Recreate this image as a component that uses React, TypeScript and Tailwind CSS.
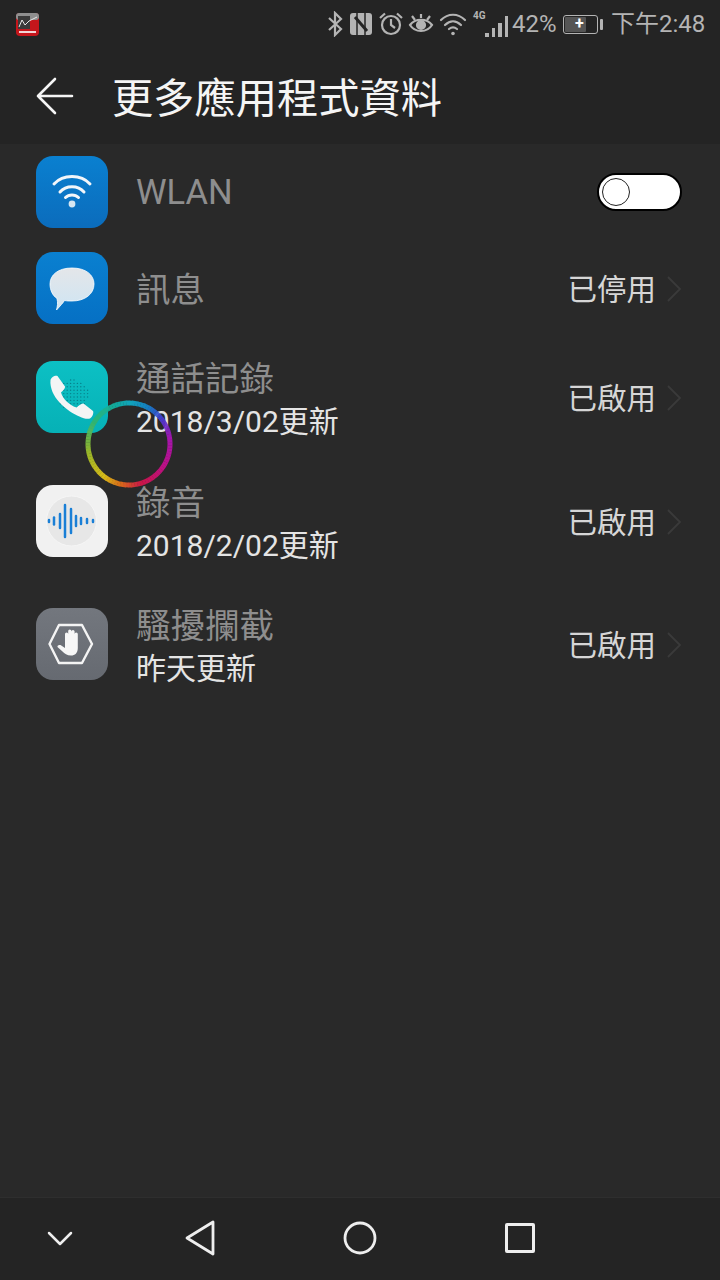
const CJK = "font-['Roboto','Noto_Sans_CJK_TC',sans-serif]";

// ring colour stops: [angle from top clockwise, r, g, b]
const ringStops = [
  [0, 16, 170, 195],
  [25, 20, 130, 200],
  [50, 70, 60, 210],
  [80, 170, 20, 180],
  [120, 195, 15, 140],
  [160, 210, 20, 75],
  [190, 225, 110, 25],
  [215, 225, 195, 25],
  [255, 160, 190, 40],
  [300, 50, 180, 110],
  [340, 15, 175, 165],
  [360, 16, 170, 195],
];

function ringColor(angle: number) {
  for (let i = 0; i < ringStops.length - 1; i++) {
    const a = ringStops[i];
    const b = ringStops[i + 1];
    if (angle >= a[0] && angle <= b[0]) {
      const t = (angle - a[0]) / (b[0] - a[0]);
      return `rgb(${a[1] + (b[1] - a[1]) * t},${a[2] + (b[2] - a[2]) * t},${a[3] + (b[3] - a[3]) * t})`;
    }
  }
  return 'rgb(16,170,195)';
}

function Ring() {
  const segments = Array.from({ length: 90 }, (_, i) => i * 4);
  const r = 41;
  const pt = (deg: number) => {
    const rad = ((deg - 90) * Math.PI) / 180;
    return `${44 + r * Math.cos(rad)} ${44 + r * Math.sin(rad)}`;
  };
  return (
    <svg width="88" height="88" viewBox="0 0 88 88" className="absolute left-[85px] top-[400px]" opacity="0.95">
      {segments.map(a => (
        <path
          key={a}
          d={`M${pt(a)} A${r} ${r} 0 0 1 ${pt(a + 4.4)}`}
          fill="none"
          stroke={ringColor(a)}
          strokeWidth="5"
        />
      ))}
    </svg>
  );
}

function WifiIcon() {
  return (
    <div className="w-[72px] h-[72px] rounded-[17px] bg-gradient-to-b from-[#0a80d0] to-[#0b6cbc] flex items-center justify-center shrink-0">
      <svg width="72" height="72" viewBox="0 0 72 72" fill="none" stroke="#f2f6fa" strokeLinecap="round" strokeWidth="3">
        <path d="M18 28 C27 18 45 18 54 28" />
        <path d="M24 36 C30 29 42 29 48 36" />
        <path d="M29.500 41.500 C33 38 39 38 42.500 41.500" />
        <circle cx="36" cy="48" r="3.400" fill="#d5e6f2" stroke="none" />
      </svg>
    </div>
  );
}

function MessageIcon() {
  return (
    <div className="w-[72px] h-[72px] rounded-[17px] bg-gradient-to-b from-[#0a80d0] to-[#0670c4] flex items-center justify-center shrink-0">
      <svg width="72" height="72" viewBox="0 0 72 72">
        <defs>
          <linearGradient id="bubble" x1="0" y1="0" x2="0" y2="1">
            <stop offset="0" stopColor="#e4e6e9" />
            <stop offset="1" stopColor="#cfe5f3" />
          </linearGradient>
        </defs>
        <path
          d="M36 16 C50 16 58 23 58 32 C58 42 49 49 36 49 C33 49 31 49 28.500 48.500 C27 51 24.500 53.500 20.500 58 C21.500 54 22 51 21 46.500 C16.500 43.500 14 38 14 32 C14 23 22 16 36 16 Z"
          fill="url(#bubble)"
          stroke="#ffffff"
          strokeWidth="0.8"
        />
      </svg>
    </div>
  );
}

function PhoneIcon() {
  const dots: [number, number][] = [];
  for (let y = 19; y <= 49; y += 3.4) {
    for (let x = 21; x <= 53; x += 3.4) {
      const d = Math.hypot(x - 37, y - 34);
      if (d < 15.5) dots.push([x, y]);
    }
  }
  return (
    <div className="w-[72px] h-[72px] rounded-[17px] bg-gradient-to-b from-[#0cc0c4] to-[#06b1b6] flex items-center justify-center shrink-0">
      <svg width="72" height="72" viewBox="0 0 72 72">
        {dots.map(([x, y]) => (
          <circle key={`${x}-${y}`} cx={x} cy={y} r="0.7" fill="#07808a" />
        ))}
        <path
          d="M14.500 19 C15 16.500 19 14 21.500 15 L29 25.500 C29.500 27.500 26 30.500 25 31.500 C27 38 33 44 40.500 46.500 C42.500 45 45.500 42 47.500 42.500 L57 50 C58 52 56.500 56 54 57.500 C49 59 41.500 55 34 50.500 C26 45 19.500 38 16.500 31 C15 27 14 23 14.500 19 Z"
          fill="#f3f5f5"
        />
      </svg>
    </div>
  );
}

function RecorderIcon() {
  const bars = [[13, 1], [18, 3.500], [24, 7], [29, 16], [35, 12], [40, 5], [45, 3], [51, 2], [57, 1]];
  return (
    <div className="w-[72px] h-[72px] rounded-[17px] bg-[#f1f1f1] flex items-center justify-center shrink-0">
      <svg width="72" height="72" viewBox="0 0 72 72">
        <circle cx="35.500" cy="36" r="25" fill="#e7e7e7" stroke="#f6f6f6" strokeWidth="1" />
        <g stroke="#1a7fd6" strokeWidth="2.500" strokeLinecap="round">
          {bars.map(([x, h]) => (
            <line key={x} x1={x} y1={36 - h} x2={x} y2={36 + h} />
          ))}
        </g>
      </svg>
    </div>
  );
}

function BlockIcon() {
  return (
    <div className="w-[72px] h-[72px] rounded-[17px] bg-gradient-to-b from-[#73777e] to-[#666a71] flex items-center justify-center shrink-0">
      <svg width="72" height="72" viewBox="0 0 72 72">
        <path d="M23 17 H46 L56 36 L46 55 H23 L13.500 36 Z" fill="none" stroke="#f4f4f4" strokeWidth="2.400" strokeLinejoin="round" />
        <path
          d="M29 36 V26 a1.600 1.600 0 0 1 3.200 0 V34 V23 a1.600 1.600 0 0 1 3.200 0 V34 V23.500 a1.600 1.600 0 0 1 3.200 0 V34 V26 a1.600 1.600 0 0 1 3.200 0 V40 C41.800 45 39 47.500 35 47.500 C31 47.500 28.500 45.500 26.500 43.500 L22 39.500 C20.500 38 22.500 36.500 24.500 37 L29 40 Z"
          fill="#f7f7f7"
        />
      </svg>
    </div>
  );
}

function Toggle() {
  return (
    <div className="w-[85px] h-[38px] rounded-full bg-white border-2 border-black flex items-center pl-[3px]">
      <div className="w-[28px] h-[28px] rounded-full bg-white border border-[#222]" />
    </div>
  );
}

type RowProps = {
  icon: React.ReactNode;
  title: string;
  sub?: string;
  status?: string;
  heightClass: string;
  toggle?: boolean;
};

function Row({ icon, title, sub, status, heightClass, toggle }: RowProps) {
  return (
    <div className={`flex items-center pl-[36px] pr-[38px] ${heightClass}`}>
      {icon}
      <div className={`ml-[28px] flex-1 min-w-0 ${toggle ? '' : 'pt-[4px]'}`}>
        <div className="text-[34.5px] leading-[44px] text-[#8e8e8e]">{title}</div>
        {sub && <div className="text-[30px] leading-[38px] mt-[2px] text-[#e4e4e4]">{sub}</div>}
      </div>
      {toggle ? (
        <Toggle />
      ) : (
        <div className="flex items-center">
          <span className="text-[29.5px] pt-[5px] text-[#d6d6d6]">{status}</span>
          <svg width="16" height="28" viewBox="0 0 16 28" fill="none" stroke="#3a3a3a" strokeWidth="1.800" className="ml-[10px] mt-[1px]">
            <path d="M2 2 L14 14 L2 26" />
          </svg>
        </div>
      )}
    </div>
  );
}

function StatusBar() {
  return (
    <div className="h-[48px] flex items-center pl-[16px] pr-[16px] text-[#b4b4b4]">
      <svg width="23" height="23" viewBox="0 0 23 23">
        <rect width="23" height="23" rx="4" fill="#c4161c" />
        <rect width="23" height="7" rx="3" fill="#8f8f8f" />
        <rect x="2" y="3" width="12" height="13" fill="#3a3a3a" />
        <path d="M3 14 L6 7 L9 12 L13 8 L21 4" fill="none" stroke="#e8e8e8" strokeWidth="1" />
        <rect x="3" y="18" width="17" height="2" fill="#f1d6d6" />
      </svg>
      <div className="ml-auto flex items-center">
        <svg width="16" height="26" viewBox="0 0 16 26" fill="none" stroke="#b4b4b4" strokeWidth="2.200">
          <path d="M2 7 L14 18 L8 24 V2 L14 8 L2 19" />
        </svg>
        <svg width="24" height="24" viewBox="0 0 24 24" className="ml-[6px]">
          <rect x="1" y="1" width="22" height="22" rx="3" fill="#b4b4b4" />
          <path d="M8 1 V23 M16 1 V23" fill="none" stroke="#242424" strokeWidth="1.500" />
          <path d="M6 5 L18 19" fill="none" stroke="#242424" strokeWidth="3" />
        </svg>
        <svg width="26" height="26" viewBox="0 0 26 26" fill="none" stroke="#b4b4b4" strokeWidth="2.200" className="ml-[5px]">
          <circle cx="13" cy="14" r="9" />
          <path d="M13 8 V14 L17 17" />
          <path d="M2 7 L7 2.500 M24 7 L19 2.500" />
        </svg>
        <svg width="26" height="24" viewBox="0 0 26 24" fill="none" stroke="#b4b4b4" strokeWidth="2.200" className="ml-[4px]">
          <path d="M2 13 C7 6 19 6 24 13 C19 21 7 21 2 13 Z" />
          <circle cx="13" cy="13" r="4" fill="#b4b4b4" />
          <path d="M4 4 L7 8 M13 2 V6 M22 4 L19 8" />
        </svg>
        <svg width="28" height="24" viewBox="0 0 28 24" fill="none" stroke="#b4b4b4" strokeWidth="2.200" strokeLinecap="round" className="ml-[5px]">
          <path d="M2 8 C9 1 19 1 26 8" />
          <path d="M6 13 C11 8 17 8 22 13" />
          <path d="M10 17 C12.500 15 15.500 15 18 17" />
          <circle cx="14" cy="21.500" r="1.800" fill="#b4b4b4" stroke="none" />
        </svg>
        <div className="relative w-[35px] h-[26px] ml-[6px]">
          <span className="absolute left-0 top-[-1px] text-[10px] leading-[12px] font-bold">4G</span>
          <div className="absolute left-[12px] bottom-0 flex items-end gap-[3px]">
            <div className="w-[3.5px] h-[4px] bg-[#b4b4b4]" />
            <div className="w-[3.5px] h-[9px] bg-[#b4b4b4]" />
            <div className="w-[3.5px] h-[14px] bg-[#b4b4b4]" />
            <div className="w-[3.5px] h-[21px] bg-[#b4b4b4]" />
          </div>
        </div>
        <span className="text-[24px] leading-[26px] ml-[4px] w-[44px] whitespace-nowrap">42%</span>
        <div className="ml-[7px] w-[35px] h-[19px] rounded-[3px] border border-[#b4b4b4] p-[1px] flex">
          <div className="w-[21px] bg-[#555] rounded-[1px] flex items-center justify-center relative">
            <span className="absolute left-[10px] text-white text-[16px] leading-none font-bold">+</span>
          </div>
        </div>
        <div className="w-[3px] h-[11px] bg-[#b4b4b4] ml-[2px] rounded-[1px]" />
        <span className="text-[24px] leading-[26px] ml-[8px] w-[93px] whitespace-nowrap">下午2:48</span>
      </div>
    </div>
  );
}

function NavBar() {
  return (
    <div className="h-[83px] bg-[#242424] border-t border-[#2e2e2e] pb-[2px] flex items-center">
      <div className="w-[600px] grid grid-cols-[120px_160px_160px_160px] items-center justify-items-center text-[#eeeeee]">
        <svg width="28" height="18" viewBox="0 0 28 18" fill="none" stroke="currentColor" strokeWidth="2.500" strokeLinecap="round" strokeLinejoin="round">
          <path d="M3 4 L14 15 L25 4" />
        </svg>
        <svg width="32" height="36" viewBox="0 0 32 36" fill="none" stroke="currentColor" strokeWidth="2.800" strokeLinejoin="round">
          <path d="M29 2 V34 L3 18 Z" />
        </svg>
        <svg width="34" height="34" viewBox="0 0 34 34" fill="none" stroke="currentColor" strokeWidth="2.800">
          <circle cx="17" cy="17" r="15" />
        </svg>
        <div className="w-[30px] h-[30px] border-[3px] border-[#eeeeee] rounded-[2px]" />
      </div>
    </div>
  );
}

export default function App() {
  return (
    <div className={`relative w-[720px] h-[1280px] flex flex-col bg-[#292929] overflow-hidden ${CJK}`}>
      <div className="bg-[#242424] h-[144px]">
        <StatusBar />
        <div className="h-[96px] flex items-center pl-[36px]">
          <svg width="38" height="38" viewBox="0 0 38 38" fill="none" stroke="#f5f5f5" strokeWidth="2.600" strokeLinecap="round" strokeLinejoin="round">
            <path d="M2 19 H36 M19 2 L2 19 L19 36" />
          </svg>
          <span className="ml-[38px] pt-[6px] text-[41.25px] leading-[52px] text-[#f5f5f5] whitespace-nowrap">更多應用程式資料</span>
        </div>
      </div>
      <div className="flex-1">
        <Row heightClass="h-[96px]" icon={<WifiIcon />} title="WLAN" toggle />
        <Row heightClass="h-[96px]" icon={<MessageIcon />} title="訊息" status="已停用" />
        <Row heightClass="h-[122px]" icon={<PhoneIcon />} title="通話記錄" sub="2018/3/02更新" status="已啟用" />
        <Row heightClass="h-[126px]" icon={<RecorderIcon />} title="錄音" sub="2018/2/02更新" status="已啟用" />
        <Row heightClass="h-[120px]" icon={<BlockIcon />} title="騷擾攔截" sub="昨天更新" status="已啟用" />
      </div>
      <NavBar />
      <Ring />
    </div>
  );
}
